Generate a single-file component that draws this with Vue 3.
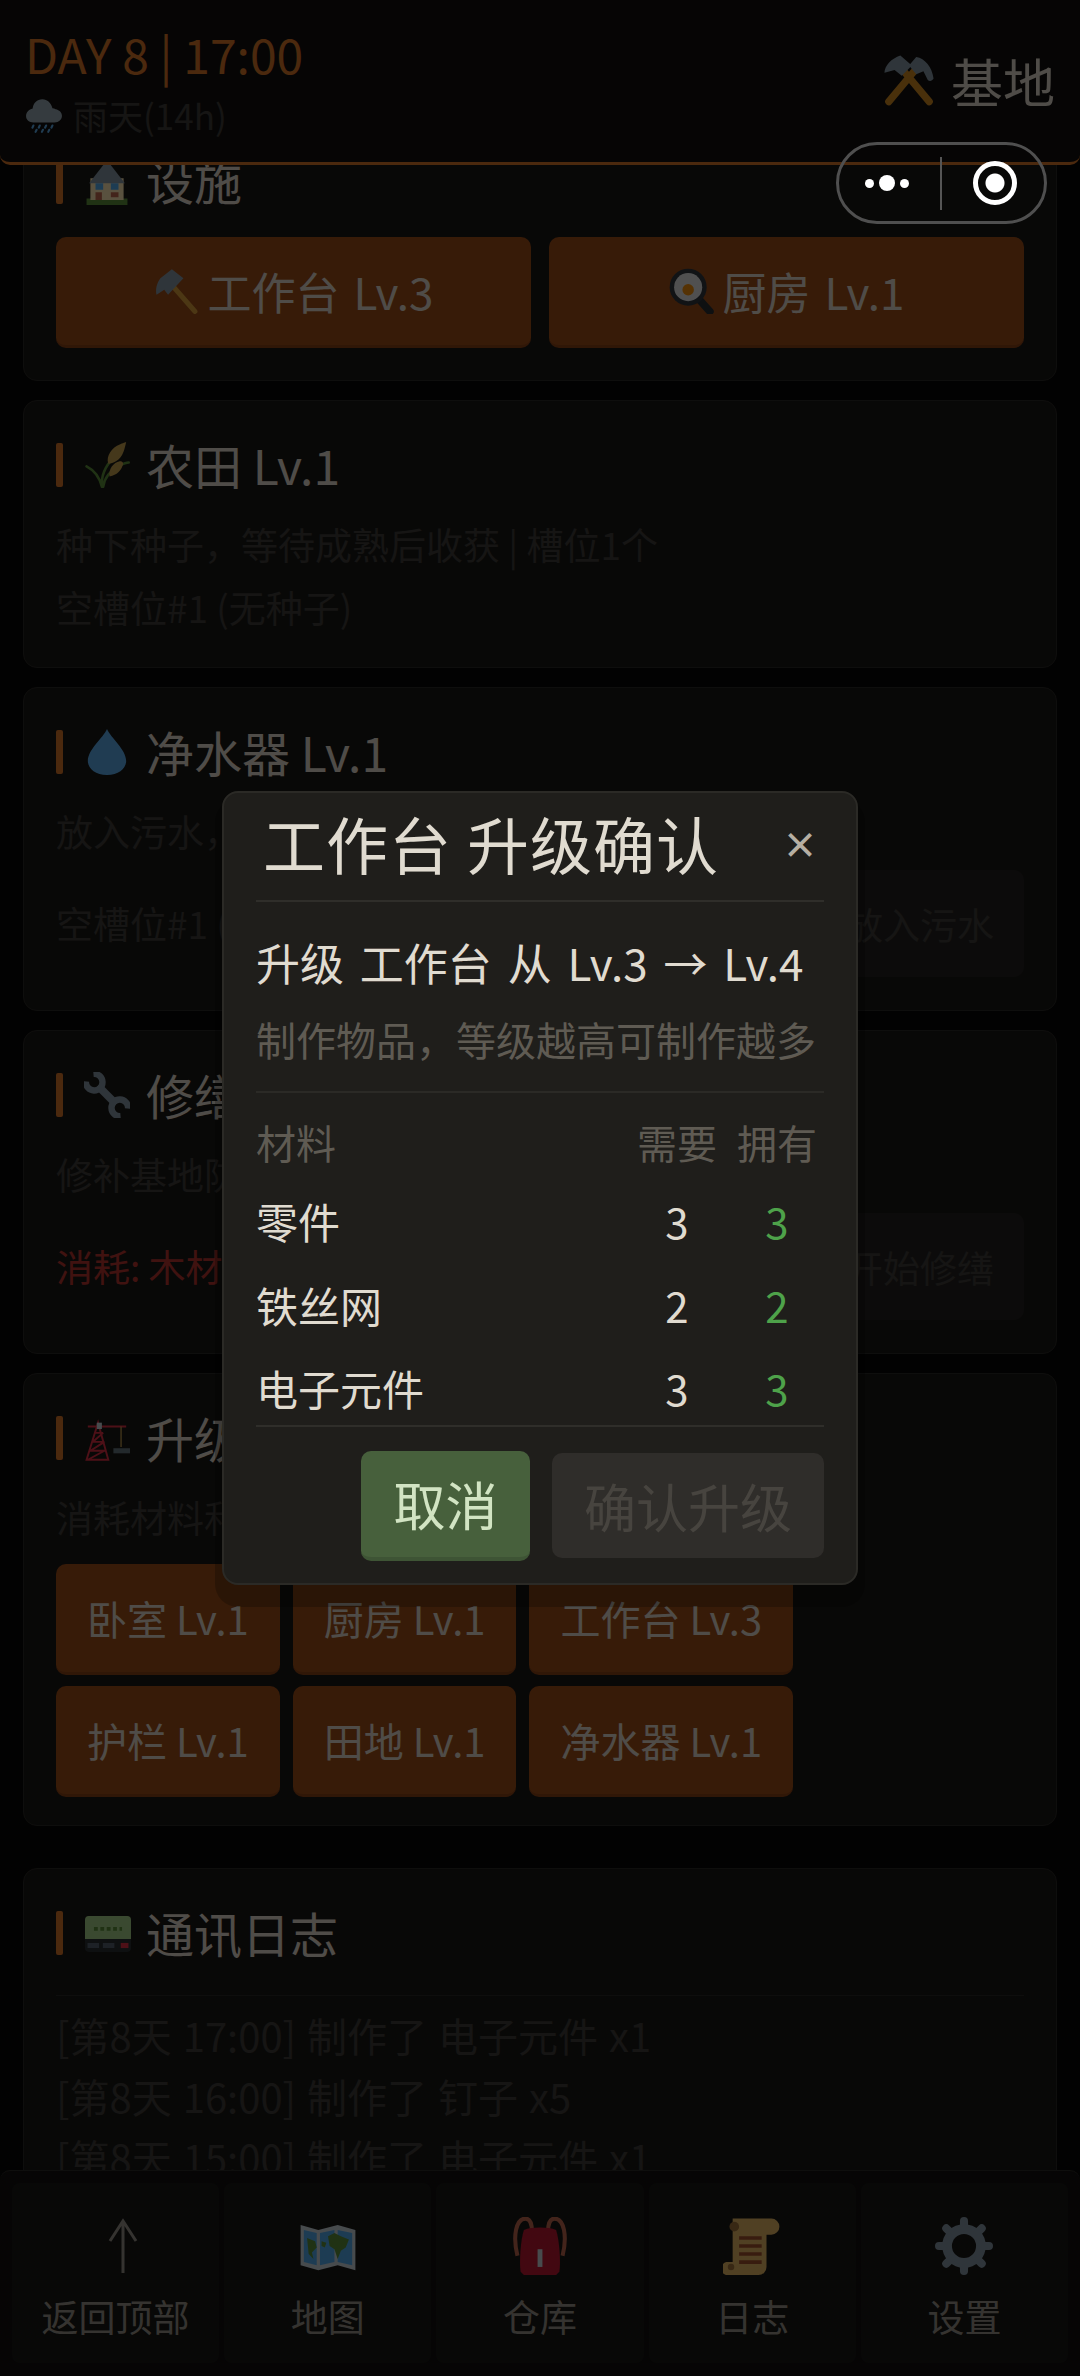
<template>
  <div class="page">
    <svg class="defs" width="0" height="0">
      <symbol id="i-rain" viewBox="0 0 36 36">
        <path fill="#99aab5" d="M29 12.500a6 6 0 0 0-3-.8C25 6.700 21 3 16.500 3 11.500 3 7.500 7 7.300 11.800 3.700 12.500 1 15.500 1 19c0 3.900 3.100 6 7 6h20c4 0 7-2.700 7-6.300 0-3-2.500-5.500-6-6.200z"/>
        <path stroke="#5dadec" stroke-width="2" stroke-linecap="round" d="M8 28l-1 2M14 28l-1 2M20 28l-1 2M26 28l-1 2M11 32l-1 2M17 32l-1 2M23 32l-1 2"/>
      </symbol>
      <symbol id="i-hammers" viewBox="0 0 36 36">
        <path fill="none" stroke="#d08a22" stroke-width="5" stroke-linecap="round" d="M4 33L24 9M32 33L12 9"/>
        <path fill="#8899a6" d="M12 1l8 7-7 7-5-4-7 2C1 8 6 3 12 1z"/>
        <path fill="#8899a6" d="M23 2c6 1 11 7 12 15-1 2-3 2-4 1l-3-6-5 2-5-6z"/>
      </symbol>
      <symbol id="i-house" viewBox="0 0 36 36">
        <path fill="#5c913b" d="M2 31h32v5H2z"/>
        <path fill="#ffe8b6" d="M5 15h26v17H5z"/>
        <path fill="#8899a6" d="M18 1L4 19h28z"/>
        <path fill="#55acee" d="M9 19h6v5H9zM21 19h6v5h-6z"/>
        <path fill="#c1694f" d="M9 26h5v6H9zM21 26h6v4h-6z"/>
      </symbol>
      <symbol id="i-hammer" viewBox="0 0 36 36">
        <path fill="none" stroke="#d99e3a" stroke-width="4" stroke-linecap="round" d="M12 11l20 23"/>
        <path fill="#8899a6" d="M14 1l9 7-12 13-3-4-6 4C1 17 2 12 5 8z"/>
      </symbol>
      <symbol id="i-pan" viewBox="0 0 36 36">
        <path stroke="#292f33" stroke-width="6" stroke-linecap="round" d="M24 25l8 9"/>
        <circle cx="15" cy="15" r="14.500" fill="#31373d"/>
        <circle cx="15" cy="15" r="11" fill="#e6e6e6"/>
        <circle cx="15" cy="17" r="4.500" fill="#f4900c"/>
      </symbol>
      <symbol id="i-rice" viewBox="0 0 36 36">
        <path fill="none" stroke="#5c913b" stroke-width="2" stroke-linecap="round" d="M14 35C13 24 19 16 26 9M14 35C12 27 8 22 2 19M15 35c1-7 6-13 12-16 2-1 5-3 8-3"/>
        <path fill="#c6a04f" d="M19 17c-2-6 3-13 9-15 2-1 5-2 5-2-1 4-2 12-8 15-2 1-4 2-6 2z"/>
        <path fill="#c6a04f" d="M20 27c-1-6 3-11 8-12 3 0 3 2 2 4-1 3-4 7-10 8z"/>
      </symbol>
      <symbol id="i-drop" viewBox="0 0 36 36">
        <path fill="#5dadec" d="M18 0c3 7 15 16 15 25 0 6-6 11-15 11S3 31 3 25C3 16 15 7 18 0z"/>
      </symbol>
      <symbol id="i-wrench" viewBox="0 0 36 36">
        <g fill="none" stroke="#8899a6">
          <path stroke-width="6" d="M11 11l14 14"/>
          <path stroke-width="5" d="M7.400 1.500A6.500 6.500 0 1 1 1.500 7.400"/>
          <path stroke-width="5" d="M28.600 34.500A6.500 6.500 0 1 1 34.500 28.600"/>
        </g>
      </symbol>
      <symbol id="i-crane" viewBox="0 0 36 36">
        <path fill="none" stroke="#dd2e44" stroke-width="1.500" d="M2 35L11 6l8 29zM4 28h13M6 21h10M8 14h7M3 35l13-7M5 28l11-7M7 21l8-7"/>
        <path stroke="#dd2e44" stroke-width="1.500" d="M3 9h30"/>
        <path stroke="#c6a04f" stroke-width="1" d="M29 9v16"/>
        <path fill="#ccd6dd" d="M10 6h4v5h-4z"/>
        <path fill="#66757f" d="M23 26h13v4H23z"/>
      </symbol>
      <symbol id="i-pager" viewBox="0 0 36 28">
        <rect width="36" height="22" y="0" rx="3" fill="#a7d28b"/>
        <path fill="#292f33" d="M0 18h36v7a3 3 0 0 1-3 3H3a3 3 0 0 1-3-3z"/>
        <path fill="#55606e" d="M2 21h9v4H2zM14 21h9v4h-9z"/>
        <path fill="#dd2e44" d="M28 21h6v4h-6z"/>
        <path stroke="#5c913b" stroke-width="3" stroke-dasharray="3 2" d="M7 10h22"/>
      </symbol>
      <symbol id="i-map" viewBox="0 0 36 36">
        <path fill="#ccd6dd" d="M1 5l11 3 12-3 11 3v25l-11-3-12 3-11-3z"/>
        <path fill="#55acee" d="M3 8l8 2v20l-8-2zM13 10l9-2v20l-9 2zM24 8l9 2v20l-9-2z"/>
        <path fill="#5c913b" d="M5 13l5 2 1 4-3 3 1 4-3-3zM18 12l4-2 4 2 5 2-2 5-3 2-2 5-2-6-3-2zM14 15l3 1-1 3-2-1z"/>
      </symbol>
      <symbol id="i-pack" viewBox="0 0 36 36">
        <path fill="none" stroke="#c1694f" stroke-width="2.500" d="M4 24C1 12 3 1 9 1c3 0 4 3 4 8M32 24c3-12 1-23-5-23-3 0-4 3-4 8"/>
        <path fill="#be1931" d="M8 8c5-2 15-2 20 0 2 6 3 20 2 26l-2 2H8l-2-2c-1-6 0-20 2-26z"/>
        <path fill="#ccd6dd" d="M16.500 20h3v11h-3z"/>
      </symbol>
      <symbol id="i-scroll" viewBox="0 0 36 36">
        <path fill="#e6b866" d="M6 1h24a5 5 0 0 1 0 10h-3v20a5 5 0 0 1-5 5H4a4 4 0 0 1-2-8h4z"/>
        <circle cx="7" cy="6" r="3" fill="#a0723a"/>
        <circle cx="5" cy="31" r="2" fill="#a0723a"/>
        <path stroke="#a0522d" stroke-width="2.200" d="M10 13h14M10 18h14M10 23h14M10 28h14"/>
      </symbol>
      <symbol id="i-gear" viewBox="0 0 36 36">
        <g fill="none" stroke="#8899a6">
          <circle cx="18" cy="18" r="10.500" stroke-width="6"/>
          <path stroke-width="5" stroke-linecap="round" d="M18 2.500v5M18 28.500v5M2.500 18h5M28.500 18h5M7 7l3.500 3.500M25.500 25.500L29 29M29 7l-3.500 3.500M10.500 25.500L7 29"/>
        </g>
      </symbol>
    </svg>

    <div class="scroll">
      <section class="card">
        <h2 class="card-title tight"><svg class="ico"><use href="#i-house" /></svg>设施</h2>
        <div class="fac-row">
          <button class="fac-btn"><svg class="ico-s"><use href="#i-hammer" /></svg>工作台 Lv.3</button>
          <button class="fac-btn"><svg class="ico-s"><use href="#i-pan" /></svg>厨房 Lv.1</button>
        </div>
      </section>

      <section class="card">
        <h2 class="card-title"><svg class="ico"><use href="#i-rice" /></svg>农田 Lv.1</h2>
        <p class="desc">种下种子，等待成熟后收获 | 槽位1个</p>
        <p class="desc">空槽位#1 (无种子)</p>
      </section>

      <section class="card slot-card">
        <h2 class="card-title"><svg class="ico"><use href="#i-drop" /></svg>净水器 Lv.1</h2>
        <p class="desc">放入污水，等待净化后收获净水</p>
        <div class="slot-row">
          <span class="desc">空槽位#1 (无污水)</span>
          <button class="off-btn">放入污水</button>
        </div>
      </section>

      <section class="card slot-card">
        <h2 class="card-title"><svg class="ico"><use href="#i-wrench" /></svg>修缮基地</h2>
        <p class="desc">修补基地防御设施</p>
        <div class="slot-row">
          <span class="desc cost">消耗: 木材 x5, 钉子 x10</span>
          <button class="off-btn">开始修缮</button>
        </div>
      </section>

      <section class="card">
        <h2 class="card-title"><svg class="ico"><use href="#i-crane" /></svg>升级设施</h2>
        <p class="desc up-desc">消耗材料和时间提升设施等级</p>
        <div class="up-list">
          <button v-for="u in upgrades" :key="u" class="up-btn">{{ u }}</button>
        </div>
      </section>

      <section class="card log-card">
        <h2 class="card-title log-title"><svg class="ico pager"><use href="#i-pager" /></svg>通讯日志</h2>
        <div class="log-list">
          <p v-for="l in logs" :key="l" class="desc log-line">{{ l }}</p>
        </div>
      </section>
    </div>

    <header class="top">
      <div>
        <div class="clock">DAY 8 | 17:00</div>
        <div class="weather"><svg class="ico-w"><use href="#i-rain" /></svg>雨天(14h)</div>
      </div>
      <div class="place"><svg class="ico-h"><use href="#i-hammers" /></svg>基地</div>
    </header>

    <nav class="nav">
      <div v-for="n in navs" :key="n.label" class="nav-item">
        <svg v-if="n.icon" class="nav-ico"><use :href="'#' + n.icon" /></svg>
        <svg v-else class="nav-ico" viewBox="0 0 58 58">
          <path fill="none" stroke="currentColor" stroke-width="3" d="M36 56V4M23 24L36 4l13 20" />
        </svg>
        <span>{{ n.label }}</span>
      </div>
    </nav>

    <div class="mask">
      <div class="dialog">
        <div class="dlg-head">
          <span class="dlg-title">工作台 升级确认</span>
          <span class="dlg-close">×</span>
        </div>
        <div class="dlg-info">
          <div class="dlg-line">升级 工作台 从 Lv.3 → Lv.4</div>
          <div class="dlg-sub">制作物品，等级越高可制作越多</div>
        </div>
        <div class="mat-row mat-head">
          <span class="mat-name">材料</span>
          <span class="mat-num">需要</span>
          <span class="mat-num">拥有</span>
        </div>
        <div v-for="m in mats" :key="m.name" class="mat-row">
          <span class="mat-name">{{ m.name }}</span>
          <span class="mat-num">{{ m.need }}</span>
          <span class="mat-num ok">{{ m.have }}</span>
        </div>
        <div class="dlg-foot">
          <button class="btn-cancel">取消</button>
          <button class="btn-confirm">确认升级</button>
        </div>
      </div>
    </div>

    <div class="capsule">
      <div class="cap-dots"><i></i><i class="big"></i><i></i></div>
      <div class="cap-line"></div>
      <div class="cap-circle"></div>
    </div>
  </div>
</template>

<script setup>
const upgrades = ['卧室 Lv.1', '厨房 Lv.1', '工作台 Lv.3', '护栏 Lv.1', '田地 Lv.1', '净水器 Lv.1']
const logs = [
  '[第8天 17:00] 制作了 电子元件 x1',
  '[第8天 16:00] 制作了 钉子 x5',
  '[第8天 15:00] 制作了 电子元件 x1'
]
const navs = [
  { label: '返回顶部', icon: '' },
  { label: '地图', icon: 'i-map' },
  { label: '仓库', icon: 'i-pack' },
  { label: '日志', icon: 'i-scroll' },
  { label: '设置', icon: 'i-gear' }
]
const mats = [
  { name: '零件', need: 3, have: 3 },
  { name: '铁丝网', need: 2, have: 2 },
  { name: '电子元件', need: 3, have: 3 }
]
</script>

<style>
html, body { margin: 0; background: #080807; }
</style>

<style scoped>
* { box-sizing: border-box; }
.page {
  position: relative;
  width: 1080px;
  height: 2376px;
  overflow: hidden;
  background: #080807;
  font-family: "Noto Sans CJK SC", sans-serif;
  color: #e2dacd;
}
.defs { position: absolute; }
button { font-family: inherit; border: 0; padding: 0; margin: 0; }
p, h2 { margin: 0; font-weight: 400; }

.scroll {
  display: flex;
  flex-direction: column;
  gap: 19px;
  padding: 117px 23px 0;
}
.card {
  background: #191816;
  border: 1px solid #2a2825;
  border-radius: 14px;
  padding: 32px 32px 28px;
}
.card-title {
  position: relative;
  display: flex;
  align-items: center;
  height: 64px;
  margin-bottom: 16px;
  padding: 0 0 3px 90px;
  font-size: 48px;
  color: #e2dacd;
}
.card-title.tight { margin-bottom: 23px; padding-bottom: 6px; }
.card-title::before {
  content: "";
  position: absolute;
  left: 0;
  top: 10px;
  width: 7px;
  height: 44px;
  border-radius: 2px;
  background: #d8752a;
}
.ico { position: absolute; left: 28px; top: 9px; width: 46px; height: 46px; }
.ico.pager { left: 29px; top: 15px; height: 36px; }

.fac-row { display: flex; gap: 18px; margin-bottom: 4px; }
.fac-btn {
  flex: 1;
  height: 111px;
  display: flex;
  align-items: center;
  justify-content: center;
  gap: 8px;
  background: #9e4e19;
  border-bottom: 3px solid #8a4216;
  border-radius: 10px;
  color: #e2dacd;
  font-size: 44px;
  word-spacing: 4px;
}
.ico-s { width: 46px; height: 46px; }

.desc { font-size: 37px; line-height: 63px; color: #3f3d3a; }
.desc.cost { color: #b83530; }
.slot-card { padding-bottom: 33px; }
.slot-row {
  display: flex;
  justify-content: space-between;
  align-items: center;
  margin-top: 7px;
}
.off-btn {
  width: 208px;
  height: 107px;
  background: #242220;
  border-radius: 10px;
  font-size: 37px;
  color: #3f3d3a;
}
.up-desc { margin-bottom: 15px; }
.up-list { display: flex; flex-wrap: wrap; gap: 11px 13px; width: 780px; }
.up-btn {
  height: 111px;
  padding: 0 31px;
  background: #9e4e19;
  border-bottom: 3px solid #8a4216;
  border-radius: 10px;
  color: #e2dacd;
  font-size: 40px;
}
.log-card { margin-top: 23px; }
.log-title { margin-bottom: 0; }
.log-list { margin-top: 30px; padding-top: 9px; border-top: 1px solid #2a2825; }
.log-line { font-size: 40px; line-height: 61px; word-spacing: 2px; white-space: nowrap; }

.top {
  position: absolute;
  left: 0;
  top: 0;
  width: 1080px;
  height: 165px;
  display: flex;
  justify-content: space-between;
  padding: 23px 25px 0 25px;
  background: #121110;
  border-bottom: 3px solid #d8752a;
  border-radius: 0 0 10px 10px;
}
.clock { font-size: 48px; line-height: 60px; color: #d8752a; }
.weather {
  display: flex;
  align-items: center;
  gap: 10px;
  margin-top: 7px;
  font-size: 35px;
  line-height: 50px;
  color: #3f3d3a;
}
.ico-w { width: 38px; height: 38px; }
.place {
  display: flex;
  align-items: center;
  gap: 16px;
  height: 72px;
  margin-top: 21px;
  font-size: 52px;
  color: #e2dacd;
}
.ico-h { width: 52px; height: 52px; }

.nav {
  position: absolute;
  left: 0;
  bottom: 0;
  width: 1080px;
  height: 206px;
  display: flex;
  gap: 5px;
  padding: 12px 12px 13px;
  background: #121110;
  border-top: 1px solid #2a2825;
  border-radius: 10px 10px 0 0;
}
.nav-item {
  flex: 1;
  display: flex;
  flex-direction: column;
  align-items: center;
  padding-top: 34px;
  background: #191816;
  border-radius: 8px;
  font-size: 37px;
  line-height: 50px;
  color: #98938a;
}
.nav-ico { width: 58px; height: 58px; margin-bottom: 16px; }

.mask {
  position: absolute;
  inset: 0;
  display: flex;
  align-items: center;
  justify-content: center;
  background: rgba(0, 0, 0, 0.65);
}
.dialog {
  width: 636px;
  height: 794px;
  padding: 0 32px;
  background: #1f1e1b;
  border: 2px solid #2b2a26;
  border-radius: 16px;
  box-shadow: 0 15px 0 7px rgba(0, 0, 0, 0.22);
}
.dlg-head {
  display: flex;
  align-items: center;
  justify-content: space-between;
  height: 109px;
  padding: 0 6px 8px 7px;
  border-bottom: 2px solid #2f2e2a;
}
.dlg-title { font-size: 62px; letter-spacing: 1px; color: #e0dbd0; }
.dlg-close { font-size: 36px; font-weight: 700; line-height: 60px; color: #b6afa3; }
.dlg-info { height: 191px; padding-top: 29px; border-bottom: 2px solid #2b2a26; }
.dlg-line { font-size: 44px; line-height: 62px; word-spacing: 6px; white-space: nowrap; color: #e0dbd0; }
.dlg-sub { margin-top: 16px; font-size: 40px; line-height: 60px; white-space: nowrap; color: #5f5b53; }
.mat-row {
  display: flex;
  align-items: center;
  height: 83.500px;
  margin-right: -3px;
  padding-bottom: 2px;
  font-size: 42px;
  color: #e0dbd0;
}
.mat-name { flex: 1; }
.mat-num { width: 100px; text-align: center; }
.mat-num.ok { color: #4ea24a; }
.mat-head { height: 74px; margin-top: 13px; font-size: 40px; }
.mat-head span { color: #5f5b53; }
.dlg-foot {
  display: flex;
  justify-content: flex-end;
  align-items: flex-start;
  gap: 22px;
  margin-top: -6px;
  padding: 24px 0 0;
  border-top: 2px solid #2f2e2a;
}
.btn-cancel {
  width: 169px;
  height: 110px;
  background: #47603c;
  border-bottom: 4px solid #3e5435;
  border-radius: 10px;
  font-size: 52px;
  color: #d2e4c3;
}
.btn-confirm {
  width: 272px;
  height: 105px;
  margin-top: 2px;
  background: #2f2d2a;
  border-radius: 10px;
  font-size: 52px;
  color: #47443f;
}

.capsule {
  position: absolute;
  left: 836px;
  top: 142px;
  width: 211px;
  height: 82px;
  display: flex;
  align-items: center;
  border: 3px solid #4f4f4f;
  border-radius: 41px;
}
.cap-dots { display: flex; align-items: center; gap: 5px; margin-left: 26px; }
.cap-dots i { width: 9px; height: 9px; border-radius: 50%; background: #fff; }
.cap-dots i.big { width: 16px; height: 16px; }
.cap-line { width: 2px; height: 53px; margin-left: 31px; background: #555; }
.cap-circle {
  width: 44px;
  height: 44px;
  margin-left: 31px;
  border: 5px solid #fff;
  border-radius: 50%;
  background: radial-gradient(circle, #fff 0 9px, transparent 10px);
}
</style>
